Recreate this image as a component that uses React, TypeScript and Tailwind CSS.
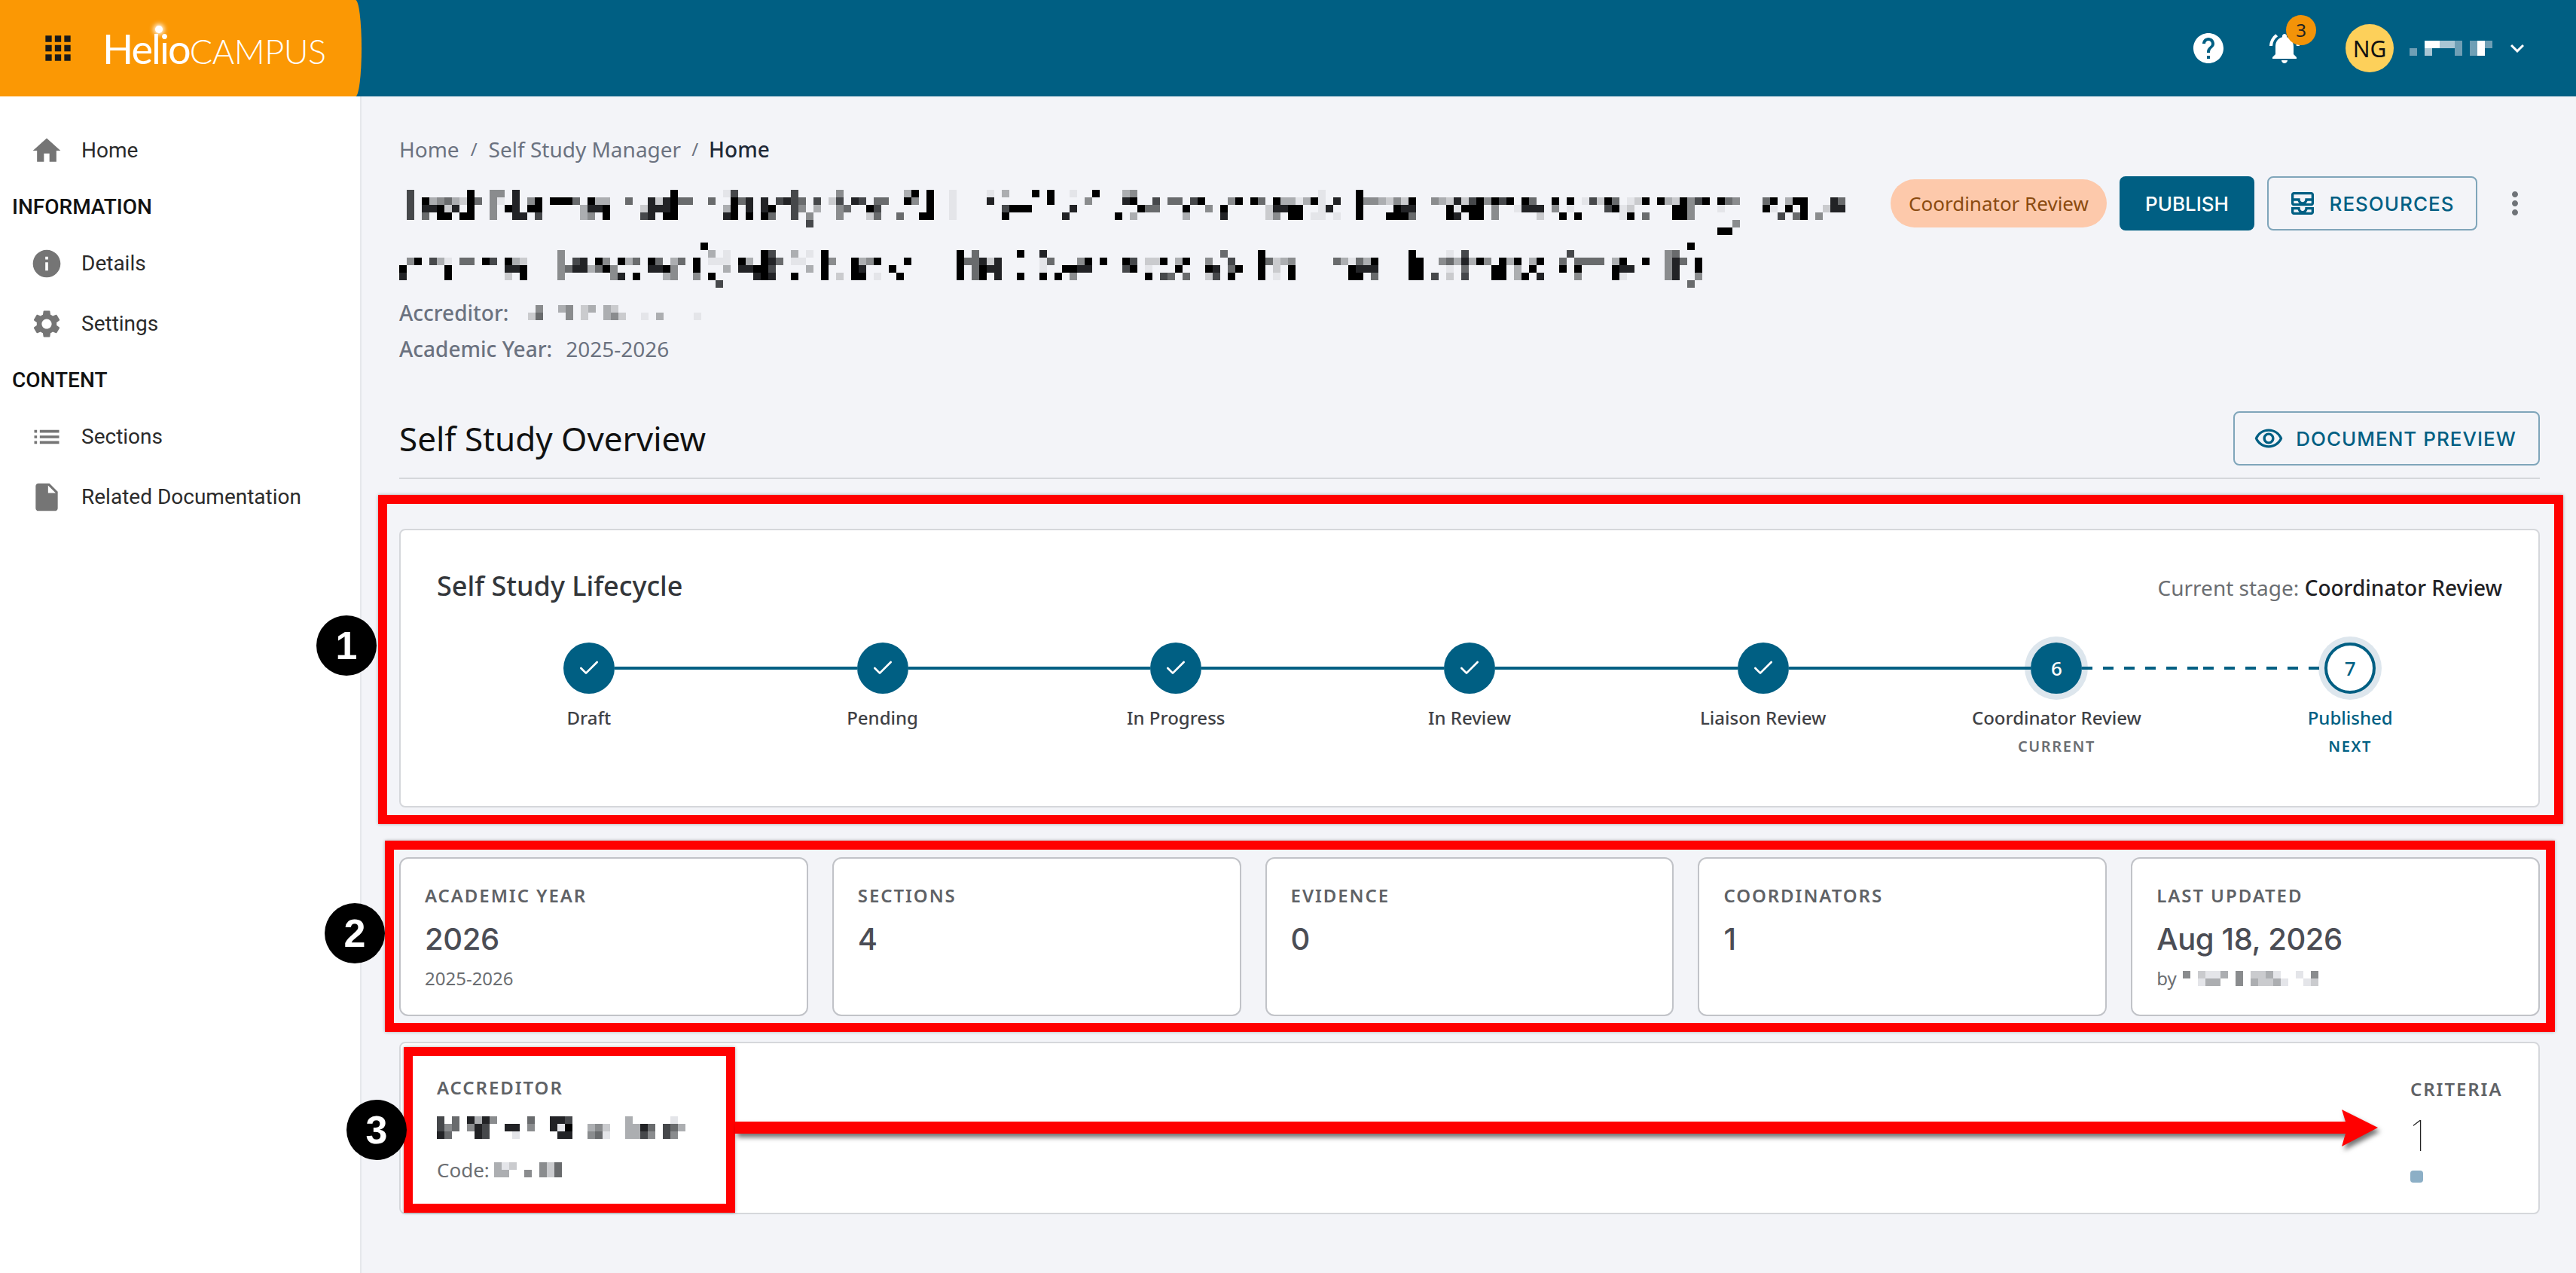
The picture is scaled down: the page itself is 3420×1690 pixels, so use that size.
import { Check } from "lucide-react";
import {
  MdApps,
  MdHelp,
  MdHome,
  MdInfo,
  MdInsertDriveFile,
  MdKeyboardArrowDown,
  MdList,
  MdMoreVert,
  MdNotificationsActive,
  MdOutlineAllInbox,
  MdOutlineRemoveRedEye,
  MdSettings,
} from "react-icons/md";
import type { IconType } from "react-icons";

const shades: Record<string, string> = {
  a: "#000000",
  b: "#222326",
  c: "#46484b",
  d: "#696b6d",
  e: "#8a8c8e",
  f: "#acaeb1",
  g: "#cacbce",
  h: "#e4e5e9",
  w: "#ffffff",
  n: "#a9c6d4",
  m: "#6f9fb5",
};

// one row per string, one letter per 10px cell, spaces are only there for counting
function Mosaic({ rows, width, className }: { rows: string[]; width: number; className?: string }) {
  const height = rows.length * 10;
  return (
    <svg width={width} height={height} viewBox={`0 0 ${width} ${height}`} shapeRendering="crispEdges" className={className}>
      {rows.map((row, y) =>
        row
          .replace(/ /g, "")
          .split("")
          .map((c, x) =>
            shades[c] ? <rect key={`${x}-${y}`} x={x * 10} y={y * 10} width={10} height={10} fill={shades[c]} /> : null,
          ),
      )}
    </svg>
  );
}

const titleRows = [
  // first line
  ".c.......a ..ee.b.... .......... ......a... ...hc..... ..c.....e. ...... " +
    ".fa.a..h.. ..h.f...a. a..h..a... fe........ .......... ......h... .a....",
  ".c.afedfga d.eh.b.ea. aaad.aff.. d..bgbadd. .d..adb.b. cbcd.c.gc. bc.dd. " +
    ".ae.a..h.. ..b....... a....e.... ba..c.dd.c a...ea.ad. affhfah.b. .aeefg " +
    "ega..efgbg caeaca.ad. .a.a.hcgad .hga.afgae ca.ade...d a.faa...bd",
  ".c.bbagb.a ..e.ab.aa. ....fbba.. ..gbbba... ...fa.b.ba ..ce.f..ed ..ac.. " +
    "....a..h.. ....caaa.. ...b...... ..add...a. .e.a.....g bbaa..hb.. .a.... " +
    "abb....aha aa.e..hbbb .e.h....ca hg.....aae ...h.....a h.a.a..gbb",
  ".c.d.aa.aa ..e..bb.c. ....fe.a.. ..cb.aa... ...ba.a.ad ..c.e...e. ..gd.. " +
    "d..aa..h.. ....a..... ..b......a .f......f. ...b.....g e.aa.hh.h. .a...a " +
    "aad....ab. aa.e.....g ..a.a..... ha.d...aae .......... .c.da.e...",
  ".......... .......... .......... .......... .......... ....c..... ...... " +
    ".......... .......... .......... .......... .......... .......... ...... " +
    ".......... .......... .......... .......... .....e....",
  ".......... .......... .......... .......... .......... .......... ...... " +
    ".......... .......... .......... .......... .......... .......... ...... " +
    ".......... .......... .......... .......... ...aa.....",
  "..........",
  // second line
  ".......... .......... .......... .......... a......... .......... ...... " +
    ".......... .......... .......... .......... .......... .......... ...... " +
    ".......... .......... .......... .........a",
  ".......... .......... .e........ .......... .f.h....ac ..f.h.a... ...... " +
    "........a. d.....a..b .......... .......... ...d....a. .......... ...... " +
    "..a....h.c .......... ...c...... ......ed..",
  ".ea.cfh.dd .ac.afg... .e.cb.ae.a fd.ad.fd.a .hhh.af.ab d.hh..ae.. afea.. " +
    ".a......ad dbgb.....h d...ea.a.. ac.gga.fa. .e..c...ad gfe.....df hdfa.. " +
    "..aa..edfb fae.afa.fa ..d.dddd.f a..a..ebd. a",
  "a.....a... ....bba... .edbbfdae. ...bbae..a ...f.bbaac ....f.a... ab...a " +
    "........a. dabb.....h ..aabb.... ca.h...a.. .ab.da..a. g.a....... abbb.. " +
    "..aa...h.d ...aa.f.a. ..a.a....a bb....eb.. a",
  "b.....a... ....g.a... .e......eb .a...fe..e .a.....bab ..a...a.g. aa.h.. " +
    "a.......a. da.b..a..a .a.e...... ...a.cd.d. .gc.a...a. h.a....... aa.d.. " +
    "..aa.c.g.c ...aa.fa.b ....e....a h.....eb.. e",
  ".......... .......... .......... .......... ..c....... .......... ...... " +
    ".......... .......... .......... .......... .......... .......... ...... " +
    ".......... .......... .......... .........d",
];

const navTop = [{ label: "Home", icon: MdHome }];
const navInfo = [
  { label: "Details", icon: MdInfo },
  { label: "Settings", icon: MdSettings },
];
const navContent = [
  { label: "Sections", icon: MdList },
  { label: "Related Documentation", icon: MdInsertDriveFile },
];

function NavItem({ label, icon: Icon }: { label: string; icon: IconType }) {
  return (
    <div className="flex h-[80px] items-center gap-[24px] pl-[40px] text-[28px] text-[#2b2b2b]">
      <Icon size={44} className="text-[#757575]" />
      <span>{label}</span>
    </div>
  );
}

function NavHeading({ children }: { children: string }) {
  return <div className="flex h-[70px] items-center pl-[16px] text-[28px] font-medium text-[#111111]">{children}</div>;
}

function Sidebar() {
  return (
    <aside className="w-[480px] shrink-0 border-r-2 border-[#e5e7eb] bg-white pt-[32px] font-['Roboto',sans-serif]">
      {navTop.map((item) => (
        <NavItem key={item.label} {...item} />
      ))}
      <NavHeading>INFORMATION</NavHeading>
      {navInfo.map((item) => (
        <NavItem key={item.label} {...item} />
      ))}
      <NavHeading>CONTENT</NavHeading>
      {navContent.map((item) => (
        <NavItem key={item.label} {...item} />
      ))}
    </aside>
  );
}

function TopBar() {
  return (
    <header className="flex h-[128px] shrink-0 items-center justify-between bg-[#005f83]">
      <div className="relative flex h-full w-[480px] items-center gap-[34px] rounded-r-[8px_64px] bg-[#fb9804] pl-[52px]">
        <MdApps size={50} className="text-[#1a1a1a]" />
        <div className="relative flex items-baseline font-['Lato',sans-serif] text-white">
          <span className="text-[54px] font-normal tracking-[-0.035em]">Helio</span>
          <span className="text-[45px] font-light tracking-[-0.01em]">CAMPUS</span>
          <span className="absolute left-[70px] top-[10px] size-[10px] rounded-full bg-white shadow-[0_0_6px_2px_#ffffff]" />
        </div>
      </div>
      <div className="flex items-center pr-[60px] text-white">
        <MdHelp size={48} />
        <div className="relative ml-[53px]">
          <MdNotificationsActive size={48} />
          <span className="absolute left-[26px] top-[-20px] flex size-[40px] items-center justify-center rounded-full bg-[#f39308] text-[24px] text-[#222222]">
            3
          </span>
        </div>
        <span className="ml-[57px] flex size-[64px] items-center justify-center rounded-full bg-[#fdd05a] text-[30px] text-[#111111]">
          NG
        </span>
        <Mosaic className="ml-[21px]" width={110} rows={["..wwnnm.mwm", "m.n...m.mw."]} />
        <MdKeyboardArrowDown size={36} className="ml-[15px]" />
      </div>
    </header>
  );
}

function Breadcrumb() {
  return (
    <div className="flex h-[40px] items-center text-[28px] text-[#6b7280]">
      <span>Home</span>
      <span className="mx-[15px] text-[24px]">/</span>
      <span>Self Study Manager</span>
      <span className="mx-[14px] text-[24px]">/</span>
      <span className="font-medium text-[#1f2937]">Home</span>
    </div>
  );
}

function PageHead() {
  return (
    <div className="mt-[16px] flex items-start justify-between">
      <div>
        <Mosaic className="mt-[18px]" width={1930} rows={titleRows} />
        <div className="mt-[9px] flex h-[48px] items-center text-[28px] text-[#6b7280]">
          <span className="font-medium">Accreditor:</span>
          <Mosaic
            className="ml-[26px]"
            width={240}
            rows={[".e..fe.gf.fg...........", "gd...e.g..feg..h.f....h"]}
          />
        </div>
        <div className="flex h-[48px] items-center text-[28px] text-[#6b7280]">
          <span className="font-medium">Academic Year:</span>
          <span className="ml-[18px]">2025-2026</span>
        </div>
      </div>
      <div className="flex items-center gap-[17px] font-['Inter',sans-serif]">
        <span className="flex h-[64px] w-[287px] items-center justify-center rounded-full bg-[#fdc9ab] font-['Noto_Sans',sans-serif] text-[26px] text-[#8a4b10]">
          Coordinator Review
        </span>
        <button className="flex h-[72px] w-[179px] items-center justify-center rounded-[8px] bg-[#005f83] text-[26px] font-medium text-white">
          PUBLISH
        </button>
        <button className="flex h-[72px] w-[279px] items-center justify-center gap-[16px] rounded-[8px] border-2 border-[#7fa5ba] pr-[4px] text-[26px] font-medium tracking-[1px] text-[#005f83]">
          <MdOutlineAllInbox size={40} />
          RESOURCES
        </button>
        <span className="flex w-[66px] justify-center">
          <MdMoreVert size={48} className="text-[#6f7378]" />
        </span>
      </div>
    </div>
  );
}

const steps = [
  { label: "Draft" },
  { label: "Pending" },
  { label: "In Progress" },
  { label: "In Review" },
  { label: "Liaison Review" },
  { label: "Coordinator Review", state: "current", tag: "CURRENT" },
  { label: "Published", state: "next", tag: "NEXT" },
];

function Step({ step, index }: { step: (typeof steps)[number]; index: number }) {
  const current = step.state === "current";
  const next = step.state === "next";
  return (
    <div className="flex flex-col items-center">
      <div className="flex h-[84px] w-full items-center">
        <span className={`relative h-[4px] flex-1 ${index === 0 ? "" : next ? "bg-[repeating-linear-gradient(90deg,#005f83_0_14px,transparent_14px_28px)]" : "bg-[#005f83]"}`} />
        <span
          className={`flex size-[68px] items-center justify-center rounded-full text-[26px] font-medium ${
            next ? "border-4 border-[#005f83] bg-white text-[#005f83]" : "bg-[#005f83] text-white"
          } ${current || next ? "ring-[8px] ring-[#dde6ed]" : ""}`}
        >
          {current ? "6" : next ? "7" : <Check size={32} strokeWidth={2} />}
        </span>
        <span
          className={`relative h-[4px] flex-1 ${
            next ? "" : current ? "bg-[repeating-linear-gradient(90deg,#005f83_0_14px,transparent_14px_28px)]" : "bg-[#005f83]"
          }`}
        />
      </div>
      <div className={`mt-[7px] text-[24px] font-medium leading-[34px] ${next ? "text-[#005f83]" : "text-[#3f4145]"}`}>
        {step.label}
      </div>
      {step.tag && (
        <div className={`mt-[7px] text-[20px] font-semibold leading-[28px] tracking-[0.08em] ${next ? "text-[#005f83]" : "text-[#6b6e72]"}`}>
          {step.tag}
        </div>
      )}
    </div>
  );
}

function Lifecycle() {
  return (
    <section className="mt-[66px] h-[370px] rounded-[8px] border-2 border-[#d5d7db] bg-white px-[48px] pt-[52px]">
      <div className="flex items-start justify-between">
        <h2 className="text-[36px] font-medium leading-[44px] text-[#33363a]">Self Study Lifecycle</h2>
        <p className="mt-[2px] text-[28px] leading-[44px] text-[#6b6e72]">
          Current stage: <span className="font-medium text-[#1f2124]">Coordinator Review</span>
        </p>
      </div>
      <div className="ml-[7px] mr-[7px] mt-[43px] grid grid-cols-7">
        {steps.map((step, i) => (
          <Step key={step.label} step={step} index={i} />
        ))}
      </div>
    </section>
  );
}

function StatCard({ label, value, sub }: { label: string; value: string; sub?: React.ReactNode }) {
  return (
    <div className="h-[211px] rounded-[12px] border-2 border-[#c1c3c8] bg-white pl-[32px] pt-[33px]">
      <div className="text-[24px] font-semibold leading-[32px] tracking-[0.08em] text-[#5f6266]">{label}</div>
      <div className="mt-[14px] font-['Inter',sans-serif] text-[40px] font-medium leading-[56px] tracking-[-0.01em] text-[#4b4d55]">{value}</div>
      {sub && <div className="mt-[8px] flex h-[32px] items-center text-[24px] text-[#6b6e72]">{sub}</div>}
    </div>
  );
}

function Stats() {
  return (
    <div className="mt-[66px] grid grid-cols-5 gap-[32px]">
      <StatCard label="ACADEMIC YEAR" value="2026" sub="2025-2026" />
      <StatCard label="SECTIONS" value="4" />
      <StatCard label="EVIDENCE" value="0" />
      <StatCard label="COORDINATORS" value="1" />
      <StatCard
        label="LAST UPDATED"
        value="Aug 18, 2026"
        sub={
          <>
            by
            <Mosaic className="ml-[8px]" width={180} rows={["e.ghhf.e.ggfh..h.e", "..hff..e.fggfh..hg"]} />
          </>
        }
      />
    </div>
  );
}

function AccreditorCard() {
  return (
    <section className="mt-[34px] flex h-[229px] justify-between rounded-[8px] border-2 border-[#d5d7db] bg-white px-[48px] pt-[43px]">
      <div>
        <div className="text-[24px] font-semibold leading-[32px] tracking-[0.08em] text-[#5f6266]">ACCREDITOR</div>
        <Mosaic
          className="mt-[22px]"
          width={330}
          rows={[
            "c.d.bfbe....d..bbc.......f.....h",
            "ced.ebc..bb.e..bha..feg..ffbd.cdf",
            "bd...bc...h.....bb..edh..ffce.ce.",
          ]}
        />
        <div className="mt-[23px] flex h-[36px] items-center text-[26px] text-[#6b6e72]">
          Code:
          <Mosaic className="ml-[6px]" width={90} rows={["fhg...egd", "ff..e.egd"]} />
        </div>
      </div>
      <div className="w-[122px]">
        <div className="mt-[2px] text-[24px] font-semibold leading-[32px] tracking-[0.08em] text-[#5f6266]">CRITERIA</div>
        <div className="mt-[14px] font-['Inter',sans-serif] text-[56px] font-thin leading-[64px] text-[#222222]">1</div>
        <div className="mt-[14px] h-[16px] w-[17px] rounded-[4px] bg-[#8cafc6]" />
      </div>
    </section>
  );
}

function Marker({ n, className }: { n: number; className: string }) {
  return (
    <span
      className={`absolute flex size-[80px] items-center justify-center rounded-full bg-black font-['Liberation_Sans',sans-serif] text-[52px] font-bold text-white ${className}`}
    >
      {n}
    </span>
  );
}

function Annotations() {
  const box = "absolute border-[12px] border-[#ff0000] shadow-[0_0_4px_rgba(0,0,0,0.3)]";
  return (
    <>
      <div className={`${box} left-[502px] top-[657px] h-[437px] w-[2901px]`} />
      <div className={`${box} left-[511px] top-[1116px] h-[254px] w-[2881px]`} />
      <div className={`${box} left-[536px] top-[1390px] h-[220px] w-[440px]`} />
      <svg
        className="absolute left-[970px] top-[1465px] drop-shadow-[3px_5px_3px_rgba(0,0,0,0.55)]"
        width={2200}
        height={70}
        viewBox="0 0 2200 70"
      >
        <path d="M6 24H2144L2139 8L2187 32L2139 57L2144 40H6Z" fill="#ff0000" />
      </svg>
      <Marker n={1} className="left-[420px] top-[817px]" />
      <Marker n={2} className="left-[431px] top-[1199px]" />
      <Marker n={3} className="left-[460px] top-[1460px]" />
    </>
  );
}

export default function App() {
  return (
    <div className="relative flex h-[1690px] w-[3420px] flex-col overflow-hidden bg-[#f3f4f8] font-['Noto_Sans',sans-serif]">
      <TopBar />
      <div className="flex min-h-0 flex-1">
        <Sidebar />
        <main className="flex-1 pl-[50px] pr-[48px] pt-[50px]">
          <Breadcrumb />
          <PageHead />
          <div className="mt-[59px] flex items-center justify-between border-b-2 border-[#d5d7db] pb-[16px]">
            <h1 className="text-[44px] leading-[72px] text-[#111111]">Self Study Overview</h1>
            <button className="flex h-[72px] w-[407px] items-center justify-center gap-[16px] rounded-[8px] border-2 border-[#7fa5ba] pr-[4px] font-['Inter',sans-serif] text-[26px] font-medium tracking-[1px] text-[#005f83]">
              <MdOutlineRemoveRedEye size={40} />
              DOCUMENT PREVIEW
            </button>
          </div>
          <Lifecycle />
          <Stats />
          <AccreditorCard />
        </main>
      </div>
      <Annotations />
    </div>
  );
}
